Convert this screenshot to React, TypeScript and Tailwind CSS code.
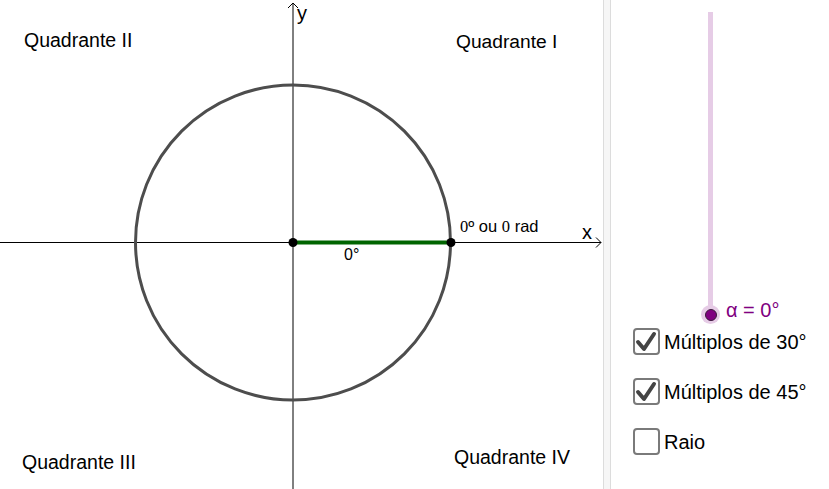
import React from 'react'

const sans = 'Liberation Sans, Arial, sans-serif'
const serif = 'Liberation Serif, Times New Roman, serif'

function Canvas() {
  const cx = 293
  const cy = 242.5
  return (
    <svg width="603" height="489" viewBox="0 0 603 489" className="block">
      {/* eixos */}
      <line x1="0" y1={cy} x2="601" y2={cy} stroke="#000" strokeWidth="1" />
      <polyline points="596,237.5 601,242.5 596,247.5" fill="none" stroke="#000" strokeWidth="1" />
      <line x1={cx} y1="489" x2={cx} y2="3" stroke="#000" strokeWidth="1" />
      <polyline points="288,8 293,3 298,8" fill="none" stroke="#000" strokeWidth="1" />
      <text x="582" y="239" fontSize="20" fontFamily={sans} fill="#000">x</text>
      <text x="297" y="20" fontSize="20" fontFamily={sans} fill="#000">y</text>

      {/* circulo */}
      <circle cx={cx} cy={cy} r="157.5" fill="none" stroke="#4d4d4d" strokeWidth="3" />
      <line x1={cx} y1={cy} x2="451" y2={cy} stroke="#006400" strokeWidth="4" />
      <circle cx={cx} cy={cy} r="4.5" fill="#000" />
      <circle cx="451" cy={cy} r="4.5" fill="#000" />

      <text x="460" y="232" fontSize="16.5" fontFamily={sans} fill="#000">
        <tspan fontFamily={serif}>0</tspan>
        <tspan>º ou </tspan>
        <tspan fontFamily={serif}>0</tspan>
        <tspan> rad</tspan>
      </text>
      <text x="344" y="260" fontSize="16" fontFamily={sans} fill="#000">0°</text>

      {/* quadrantes */}
      <text x="24" y="47" fontSize="19.5" fontFamily={sans} fill="#000">Quadrante II</text>
      <text x="456" y="48" fontSize="19.2" fontFamily={sans} fill="#000">Quadrante I</text>
      <text x="22" y="469" fontSize="19.5" fontFamily={sans} fill="#000">Quadrante III</text>
      <text x="454" y="464" fontSize="19.5" fontFamily={sans} fill="#000">Quadrante IV</text>
    </svg>
  )
}

function Check({ checked, label }: { checked: boolean; label: string }) {
  return (
    <div className="flex items-center h-[27px]">
      <div className="w-[27px] h-[27px] border-2 border-[#7a7a7a] rounded-[4px] bg-white shrink-0">
        {checked && (
          <svg width="23" height="23" viewBox="0 0 23 23" className="block">
            <polyline points="3,12 9,19 19,4" fill="none" stroke="#444" strokeWidth="4" strokeLinecap="round" strokeLinejoin="round" />
          </svg>
        )}
      </div>
      <span className="ml-[4px] text-[20px] text-black leading-none" style={{ fontFamily: sans }}>{label}</span>
    </div>
  )
}

export default function App() {
  return (
    <div className="flex w-[829px] h-[489px] overflow-hidden bg-white">
      <div className="w-[603px] h-[489px] shrink-0">
        <Canvas />
      </div>
      <div className="w-[8px] h-[489px] shrink-0 border-x border-[#dcdcdc] bg-[#f6f6f6]" />
      <div className="flex-1">
        <div className="pt-[12px] h-[328px]">
          <div className="relative ml-[97px] w-[5px] h-[302px] bg-[#e6cce6]">
            <div className="absolute left-[-7px] bottom-[-10px] flex items-center">
              <div className="w-[19px] h-[19px] rounded-full bg-[#e6cce6] flex items-center justify-center">
                <div className="w-[12px] h-[12px] rounded-full bg-[#800080] border border-[#3a1a3a]" />
              </div>
              <span className="ml-[6px] -mt-[9px] text-[20px] text-[#800080] whitespace-nowrap leading-none" style={{ fontFamily: sans }}>α = 0°</span>
            </div>
          </div>
        </div>
        <div className="flex flex-col gap-[23px] pl-[22px]">
          <Check checked label="Múltiplos de 30°" />
          <Check checked label="Múltiplos de 45°" />
          <Check checked={false} label="Raio" />
        </div>
      </div>
    </div>
  )
}
